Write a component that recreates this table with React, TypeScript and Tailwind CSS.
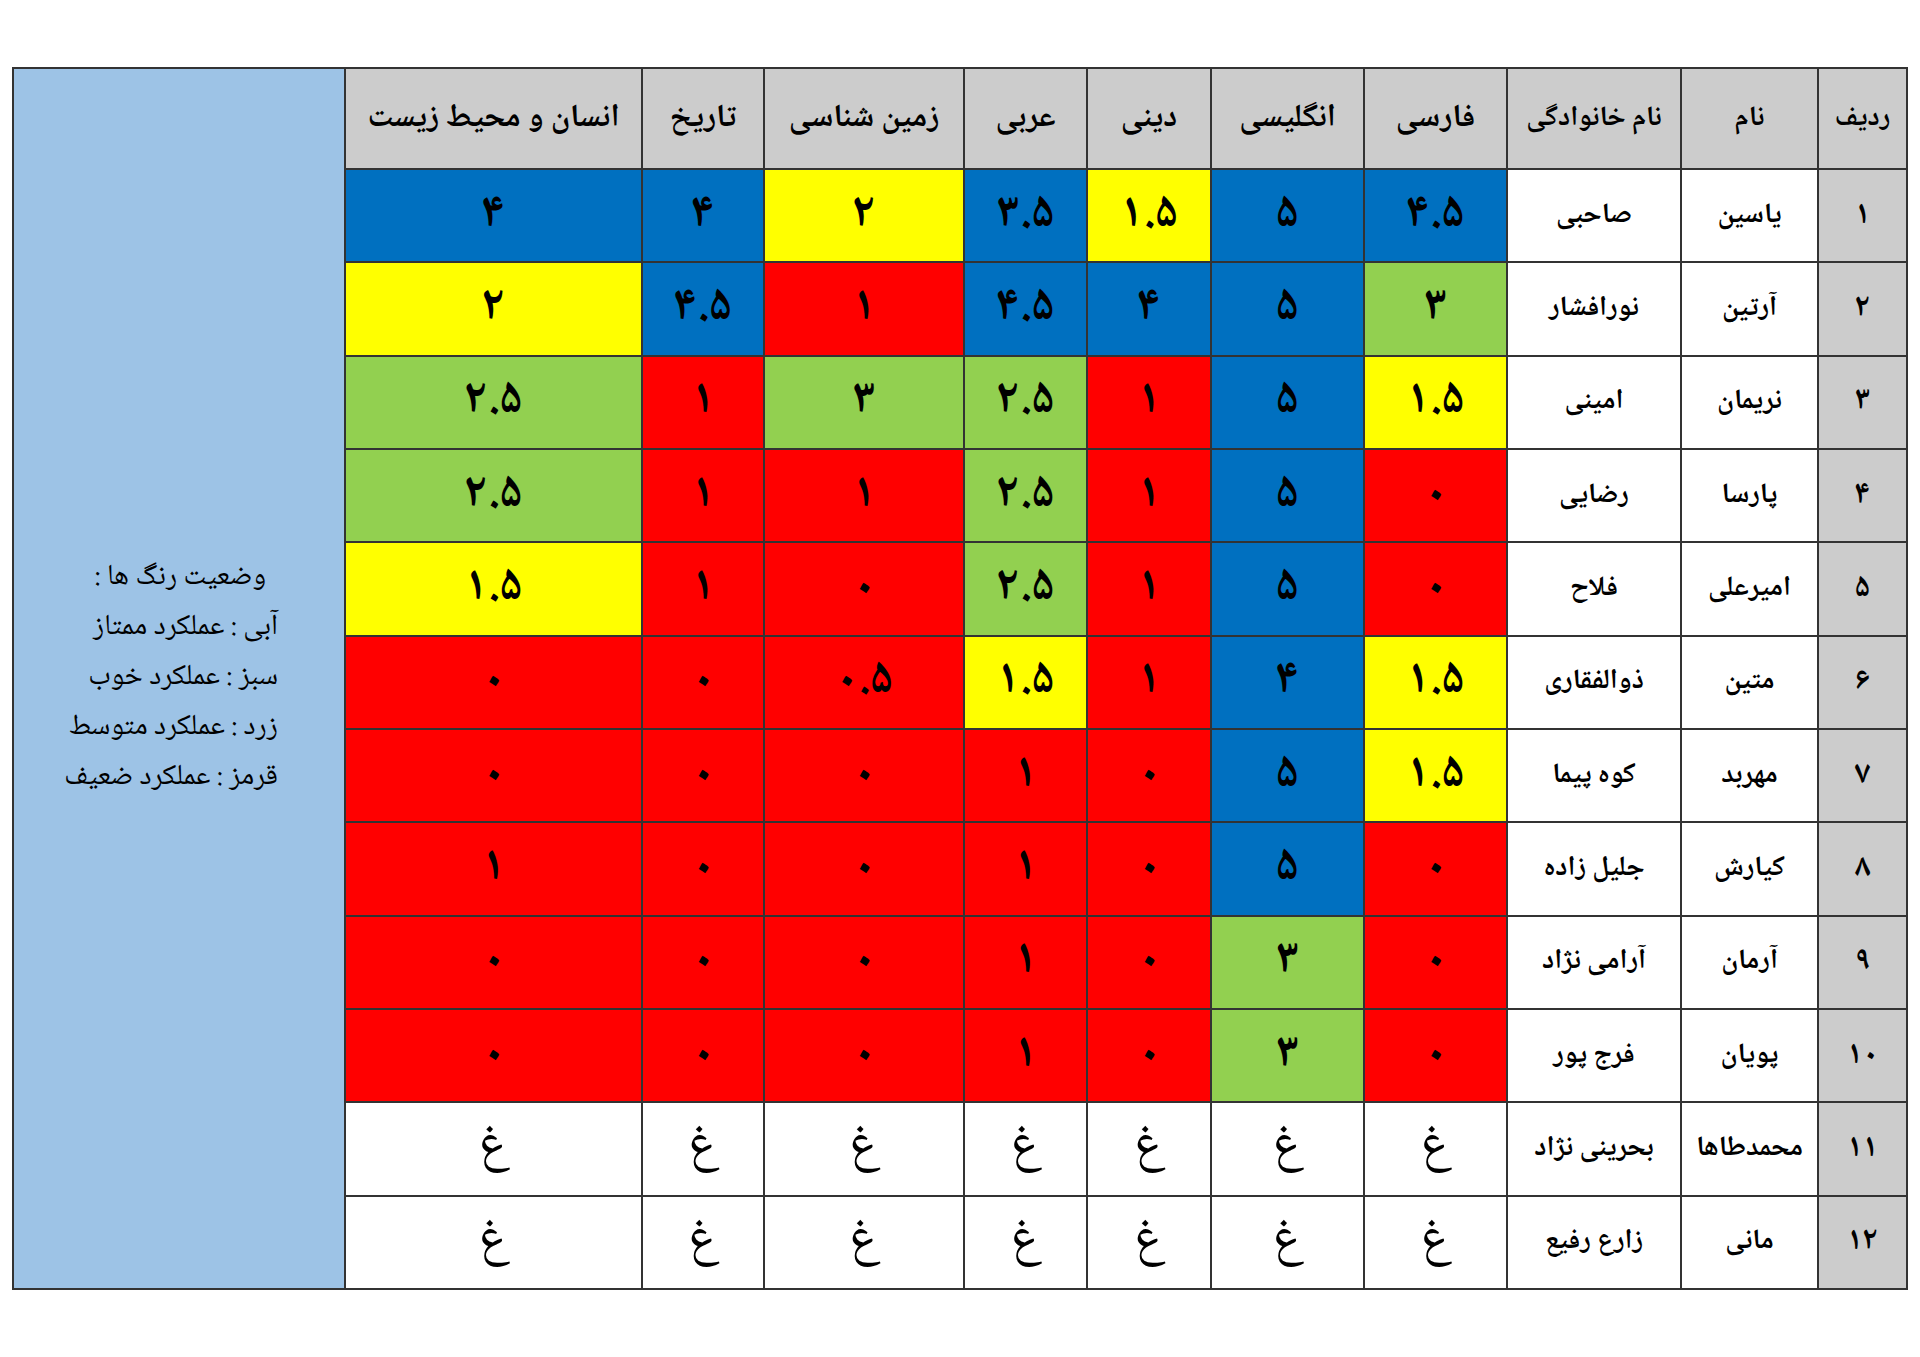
import React from "react";

type C = "b" | "g" | "y" | "r" | "w";

const bgMap: Record<C, string> = {
  b: "bg-[#0070c0]",
  g: "bg-[#92d050]",
  y: "bg-[#ffff00]",
  r: "bg-[#ff0000]",
  w: "bg-white",
};

const headers = [
  "ردیف",
  "نام",
  "نام خانوادگی",
  "فارسی",
  "انگلیسی",
  "دینی",
  "عربی",
  "زمین شناسی",
  "تاریخ",
  "انسان و محیط زیست",
];

const rows: { n: string; name: string; fam: string; v: [string, C][] }[] = [
  { n: "۱", name: "یاسین", fam: "صاحبی", v: [["۴.۵", "b"], ["۵", "b"], ["۱.۵", "y"], ["۳.۵", "b"], ["۲", "y"], ["۴", "b"], ["۴", "b"]] },
  { n: "۲", name: "آرتین", fam: "نورافشار", v: [["۳", "g"], ["۵", "b"], ["۴", "b"], ["۴.۵", "b"], ["۱", "r"], ["۴.۵", "b"], ["۲", "y"]] },
  { n: "۳", name: "نریمان", fam: "امینی", v: [["۱.۵", "y"], ["۵", "b"], ["۱", "r"], ["۲.۵", "g"], ["۳", "g"], ["۱", "r"], ["۲.۵", "g"]] },
  { n: "۴", name: "پارسا", fam: "رضایی", v: [["۰", "r"], ["۵", "b"], ["۱", "r"], ["۲.۵", "g"], ["۱", "r"], ["۱", "r"], ["۲.۵", "g"]] },
  { n: "۵", name: "امیرعلی", fam: "فلاح", v: [["۰", "r"], ["۵", "b"], ["۱", "r"], ["۲.۵", "g"], ["۰", "r"], ["۱", "r"], ["۱.۵", "y"]] },
  { n: "۶", name: "متین", fam: "ذوالفقاری", v: [["۱.۵", "y"], ["۴", "b"], ["۱", "r"], ["۱.۵", "y"], ["۰.۵", "r"], ["۰", "r"], ["۰", "r"]] },
  { n: "۷", name: "مهربد", fam: "کوه پیما", v: [["۱.۵", "y"], ["۵", "b"], ["۰", "r"], ["۱", "r"], ["۰", "r"], ["۰", "r"], ["۰", "r"]] },
  { n: "۸", name: "کیارش", fam: "جلیل زاده", v: [["۰", "r"], ["۵", "b"], ["۰", "r"], ["۱", "r"], ["۰", "r"], ["۰", "r"], ["۱", "r"]] },
  { n: "۹", name: "آرمان", fam: "آرامی نژاد", v: [["۰", "r"], ["۳", "g"], ["۰", "r"], ["۱", "r"], ["۰", "r"], ["۰", "r"], ["۰", "r"]] },
  { n: "۱۰", name: "پویان", fam: "فرج پور", v: [["۰", "r"], ["۳", "g"], ["۰", "r"], ["۱", "r"], ["۰", "r"], ["۰", "r"], ["۰", "r"]] },
  { n: "۱۱", name: "محمدطاها", fam: "بحرینی نژاد", v: Array(7).fill(["غ", "w"]) as [string, C][] },
  { n: "۱۲", name: "مانی", fam: "زارع رفیع", v: Array(7).fill(["غ", "w"]) as [string, C][] },
];

const font = "font-['Noto_Naskh_Arabic','Noto_Sans_Arabic','DejaVu_Sans',sans-serif]";

export default function App() {
  return (
    <div className={`w-[1920px] h-[1357px] bg-white ${font} text-black`}>
      <div className="pt-[67px] pl-[12px]">
        <div
          dir="rtl"
          className="grid w-[1896px] gap-[2px] p-[2px] bg-[#333333] grid-cols-[87px_135px_172px_141px_151px_122px_121px_198px_120px_295px_330px] grid-rows-[99px_repeat(12,91.33px)]"
        >
          <div className="[grid-column:11] [grid-row:1/14] bg-[#9dc3e6] flex flex-col justify-center items-start pr-[66px] text-[29px] leading-[50px]">
            <div className="mr-[12px]">وضعیت رنگ ها :</div>
            <div>آبی : عملکرد ممتاز</div>
            <div>سبز : عملکرد خوب</div>
            <div>زرد : عملکرد متوسط</div>
            <div>قرمز : عملکرد ضعیف</div>
          </div>
          {headers.map((h, i) => (
            <div
              key={i}
              className={`bg-[#cccccc] flex items-center justify-center font-bold ${
                i < 3 ? "text-[28px]" : "text-[32px]"
              }`}
            >
              {h}
            </div>
          ))}
          {rows.map((r, ri) => (
            <React.Fragment key={ri}>
              <div className="bg-[#cccccc] flex items-center justify-center font-bold text-[32px]">
                {r.n}
              </div>
              <div className="bg-white flex items-center justify-center font-bold text-[28px]">
                {r.name}
              </div>
              <div className="bg-white flex items-center justify-center font-bold text-[28px]">
                {r.fam}
              </div>
              {r.v.map(([t, c], ci) => (
                <div
                  key={ci}
                  className={`${bgMap[c]} flex items-center justify-center ${
                    t === "غ" ? "font-normal text-[50px]" : "font-bold text-[48px]"
                  }`}
                >
                  {t}
                </div>
              ))}
            </React.Fragment>
          ))}
        </div>
      </div>
    </div>
  );
}
